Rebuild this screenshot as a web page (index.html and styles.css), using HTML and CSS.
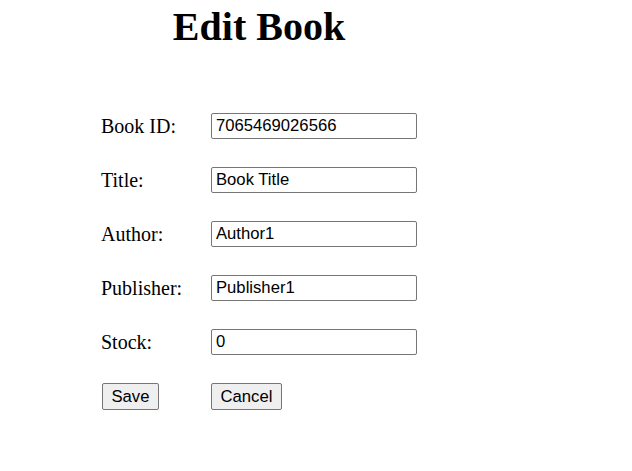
FILE: index.html
```html
<!DOCTYPE html>
<html>
<head>
<meta charset="utf-8">
<title>Edit Book</title>
<link rel="stylesheet" href="styles.css">
</head>
<body>
<div class="wrap">
  <h1 class="title">Edit Book</h1>
  <form class="form">
    <label class="lbl" for="id">Book ID:</label>
    <input class="inp" id="id" type="text" value="7065469026566">
    <label class="lbl" for="t">Title:</label>
    <input class="inp" id="t" type="text" value="Book Title">
    <label class="lbl" for="a">Author:</label>
    <input class="inp" id="a" type="text" value="Author1">
    <label class="lbl" for="p">Publisher:</label>
    <input class="inp" id="p" type="text" value="Publisher1">
    <label class="lbl" for="s">Stock:</label>
    <input class="inp" id="s" type="text" value="0">
    <div class="cell cell-first"><button class="btn" type="button">Save</button></div>
    <div class="cell"><button class="btn" type="button">Cancel</button></div>
  </form>
</div>
</body>
</html>
```

FILE: styles.css
```css
html, body {
  margin: 0;
  padding: 0;
  background: #ffffff;
}
body {
  font-family: "Liberation Serif", "Times New Roman", serif;
  color: #000;
}
.wrap {
  width: 316px;
  margin-left: 101px;
  padding-top: 4px;
}
.title {
  margin: 0;
  font-size: 40px;
  line-height: 46px;
  font-weight: bold;
  text-align: center;
}
.form {
  margin-top: 63px;
  display: grid;
  grid-template-columns: 110px 206px;
  grid-auto-rows: minmax(26px, auto);
  row-gap: 28px;
  align-items: center;
}
.lbl {
  font-size: 20px;
  line-height: 23px;
}
.inp {
  box-sizing: border-box;
  width: 206px;
  height: 26px;
  margin: 0;
  padding: 0 4px;
  border: 1px solid #767676;
  border-radius: 2px;
  font-family: "Liberation Sans", Arial, sans-serif;
  font-size: 16.67px;
  color: #000;
  background: #fff;
}
.cell {
  display: flex;
  align-items: flex-start;
  height: 27px;
}
.cell-first {
  padding-left: 1px;
}
.btn {
  box-sizing: border-box;
  height: 27px;
  margin: 0;
  padding: 0 8.5px;
  border: 1px solid #767676;
  border-radius: 2px;
  background: #efefef;
  font-family: "Liberation Sans", Arial, sans-serif;
  font-size: 16.67px;
  color: #000;
  line-height: 19px;
}
```
